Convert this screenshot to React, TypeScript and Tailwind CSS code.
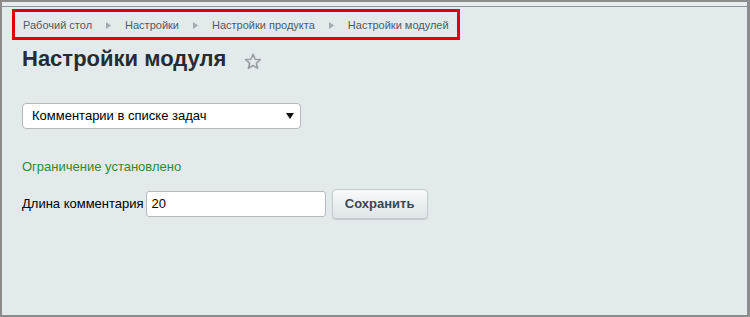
import React from "react";

const crumbs = ["Рабочий стол", "Настройки", "Настройки продукта", "Настройки модулей"];

function Arrow() {
  return (
    <svg width="5" height="7" viewBox="0 0 5 7" className="mx-[14px] shrink-0">
      <path d="M0 0 L5 3.5 L0 7 Z" fill="#a3abb1" />
    </svg>
  );
}

function Star() {
  return (
    <svg width="18" height="17" viewBox="0 0 24 23" className="ml-[18px] mt-[4px]">
      <path
        d="M12 1.8 L14.9 8.4 L22 9 L16.6 13.7 L18.2 20.7 L12 17 L5.8 20.7 L7.4 13.7 L2 9 L9.1 8.4 Z"
        fill="none"
        stroke="#9aa1a6"
        strokeWidth="2.2"
        strokeLinejoin="round"
      />
    </svg>
  );
}

export default function App() {
  return (
    <div
      className="w-[750px] h-[317px] bg-[#8c8c8c] pt-[2px] pl-[2px] pr-[3px] pb-[2px]"
      style={{ fontFamily: "Arial, 'Liberation Sans', sans-serif" }}
    >
      <div className="h-full flex flex-col bg-[#e3eaec]">
        <div className="h-[5px] bg-[#e8eef0] border-b-[1px] border-[#8d9599] shrink-0" />
        <div className="pl-[10px] pt-[2px]">
          <div className="w-[448px] h-[31px] border-[3px] border-[#e0000f] flex items-center pl-[8px] pt-[2px] text-[11px] text-[#4e5a69]">
            {crumbs.map((c, i) => (
              <React.Fragment key={c}>
                {i > 0 && <Arrow />}
                <span className="whitespace-nowrap">{c}</span>
              </React.Fragment>
            ))}
          </div>
          <div className="flex items-center pl-[10px] mt-[5px]">
            <h1 className="text-[22px] font-bold text-[#262c31] leading-[28px]">Настройки модуля</h1>
            <Star />
          </div>
          <div className="pl-[10px] mt-[30px]">
            <div className="w-[279px] h-[26px] bg-white border border-[#b3b9bc] rounded-[4px] flex items-center justify-between pl-[9px] pr-[6px] text-[13px] text-[#000]">
              <span>Комментарии в списке задач</span>
              <svg width="8" height="6" viewBox="0 0 8 6">
                <path d="M0 0 L8 0 L4 6 Z" fill="#111" />
              </svg>
            </div>
            <div className="mt-[30px] text-[13px] text-[#2f8a2f] leading-[16px]">Ограничение установлено</div>
            <div className="mt-[14px] flex items-center text-[13px] text-[#000]">
              <span className="mr-[2px]">Длина комментария</span>
              <div className="w-[180px] h-[26px] bg-white border border-[#b3b9bc] rounded-[3px] flex items-center pl-[5px] text-[13px]">
                20
              </div>
              <button className="ml-[6px] w-[96px] h-[30px] rounded-[4px] border border-[#c3cbcf] bg-gradient-to-b from-[#f8fafb] to-[#dfe5e8] shadow-[0_1px_1px_rgba(0,0,0,0.15)] text-[13px] font-bold text-[#3c474f]">
                Сохранить
              </button>
            </div>
          </div>
        </div>
      </div>
    </div>
  );
}
